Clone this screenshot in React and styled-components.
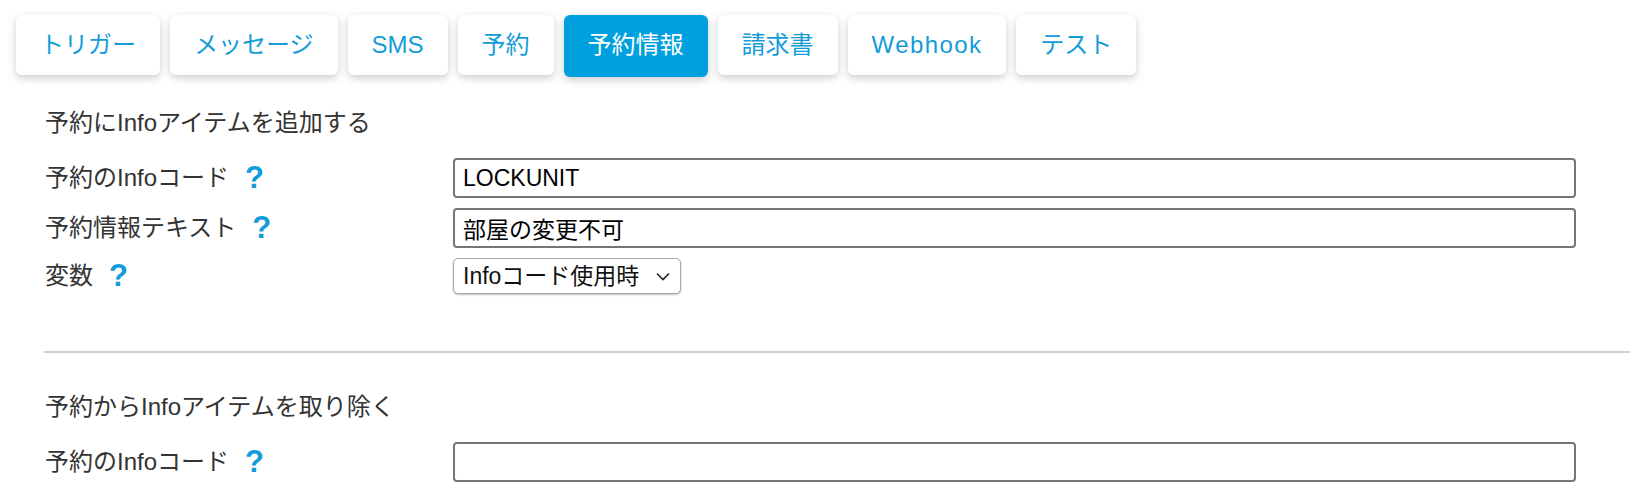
import React from 'react';
import styled, {createGlobalStyle} from "styled-components";

const tabs = [
    {label: 'トリガー'},
    {label: 'メッセージ'},
    {label: 'SMS'},
    {label: '予約'},
    {label: '予約情報', active: true},
    {label: '請求書'},
    {label: 'Webhook', spacing: 1.4},
    {label: 'テスト'},
];

const GlobalStyle = createGlobalStyle`
  body {
    margin: 0;
    background: #fff;
    font-family: "Liberation Sans", "Noto Sans CJK JP", sans-serif;
  }
`;

const Help = () => <HelpMark>?</HelpMark>;

const Chevron = () => (
    <ChevronIcon width="14" height="9" viewBox="0 0 14 9">
        <path d="M1 1.5 L7 7.5 L13 1.5" fill="none" stroke="#222" strokeWidth="1.6"/>
    </ChevronIcon>
);

const App = () => {
    return (
        <StyledPage>
            <GlobalStyle/>

            <TabBar>
                {tabs.map((t) => (
                    <Tab key={t.label} $active={t.active} $spacing={t.spacing}>{t.label}</Tab>
                ))}
            </TabBar>

            <Section>
                <Heading>予約にInfoアイテムを追加する</Heading>
                <Rows>
                    <Label>予約のInfoコード<Help/></Label>
                    <Input defaultValue="LOCKUNIT"/>

                    <Label>予約情報テキスト<Help/></Label>
                    <Input defaultValue="部屋の変更不可"/>

                    <Label>変数<Help/></Label>
                    <SelectWrap>
                        <Select defaultValue="info">
                            <option value="info">Infoコード使用時</option>
                        </Select>
                        <Chevron/>
                    </SelectWrap>
                </Rows>
            </Section>

            <Divider/>

            <Section $top={39}>
                <Heading>予約からInfoアイテムを取り除く</Heading>
                <Rows>
                    <Label>予約のInfoコード<Help/></Label>
                    <Input defaultValue=""/>
                </Rows>
            </Section>
        </StyledPage>
    );
};

const StyledPage = styled.div`
  width: 1630px;
  height: 490px;
  overflow: hidden;
  color: #333;
`;

const TabBar = styled.nav`
  display: flex;
  align-items: flex-start;
  gap: 10px;
  padding: 15px 16px 0;
`;

const Tab = styled.div`
  height: ${p => p.$active ? '62px' : '60px'};
  padding: ${p => p.$active ? '0 24px 2px' : '0 24px'};
  display: flex;
  align-items: center;
  box-sizing: border-box;
  border-radius: 6px;
  font-size: 24px;
  line-height: 30px;
  letter-spacing: ${p => p.$spacing ? `${p.$spacing}px` : 'normal'};
  background: ${p => p.$active ? '#00a0de' : '#fff'};
  color: ${p => p.$active ? '#fff' : '#149cd8'};
  box-shadow: 0 3px 8px rgba(0, 0, 0, 0.2);
  white-space: nowrap;
`;

const Section = styled.section`
  padding: ${p => p.$top ?? 31}px 54px 0 45px;
`;

const Heading = styled.h3`
  margin: 0 0 20px;
  font-size: 24px;
  line-height: 30px;
  font-weight: normal;
  color: #333;
`;

const Rows = styled.div`
  display: grid;
  grid-template-columns: 408px 1fr;
  row-gap: 10px;
  align-items: center;
`;

const Label = styled.label`
  display: flex;
  align-items: center;
  font-size: 24px;
  line-height: 30px;
  color: #333;
`;

const HelpMark = styled.span`
  margin-left: 16px;
  font-size: 31px;
  font-weight: bold;
  line-height: 30px;
  color: #129cd9;
  font-family: "Liberation Sans", sans-serif;
`;

const Input = styled.input`
  height: 40px;
  box-sizing: border-box;
  border: 2px solid #767676;
  border-radius: 4px;
  padding: 0 8px;
  font-family: "Liberation Sans", "Noto Sans CJK JP", sans-serif;
  font-size: 23px;
  color: #000;
  outline: none;
`;

const SelectWrap = styled.div`
  position: relative;
  width: 228px;
  height: 36px;
`;

const Select = styled.select`
  appearance: none;
  width: 100%;
  height: 100%;
  box-sizing: border-box;
  border: 1px solid #a8a8a8;
  border-radius: 5px;
  padding: 0 30px 0 9px;
  background: #fff;
  box-shadow: 0 1px 2px rgba(0, 0, 0, 0.25);
  font-family: "Liberation Sans", "Noto Sans CJK JP", sans-serif;
  font-size: 23px;
  color: #111;
  outline: none;
`;

const ChevronIcon = styled.svg`
  position: absolute;
  right: 11px;
  top: 14px;
  pointer-events: none;
`;

const Divider = styled.hr`
  margin: 57px 0 0 44px;
  border: 0;
  border-top: 2px solid #d0d0d0;
`;

export default App;
